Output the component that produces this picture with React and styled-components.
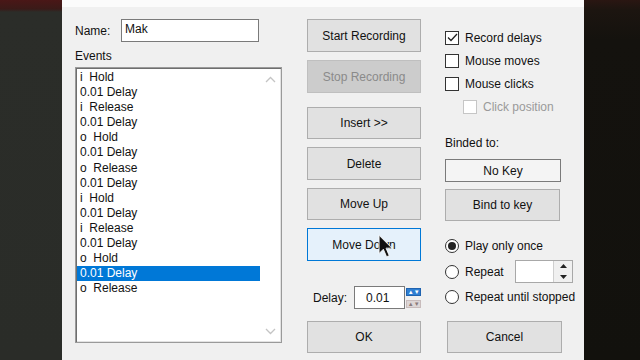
import React from 'react'
import styled, { createGlobalStyle } from 'styled-components'

const GlobalStyle = createGlobalStyle`
  body {
    margin: 0;
    overflow: hidden;
    font-family: "Liberation Sans", Arial, sans-serif;
  }
`

const Page = styled.div`
  display: flex;
  width: 640px;
  height: 360px;
  overflow: hidden;
`

const SideBg = styled.div`
  width: ${props => props.w}px;
  flex-shrink: 0;
  background: ${props => props.dark
    ? 'linear-gradient(180deg, #2a1612 0px, #1c1510 10px, #14120e 40px, #12110d 100%)'
    : 'linear-gradient(180deg, #4a1717 0px, #3a1a18 9px, #2b2d29 12px, #2a2c28 100%)'};
`

const Dialog = styled.div`
  width: 522px;
  flex-shrink: 0;
  display: flex;
  flex-direction: column;
  background: #f0f0f0;
  color: #111;
  font-size: 12px;
`

const TitleStrip = styled.div`
  height: 7px;
  background: #fbfbfb;
`

const Body = styled.div`
  flex: 1;
  display: flex;
  padding: 12px 0 0 13px;
`

const LeftCol = styled.div`
  width: 207px;
  display: flex;
  flex-direction: column;
`

const NameRow = styled.div`
  display: flex;
  align-items: center;
  height: 23px;
`

const Label = styled.span`
  width: ${props => props.w || 'auto'};
  font-size: 12px;
`

const TextBox = styled.div`
  width: 138px;
  height: 23px;
  box-sizing: border-box;
  border: 1px solid #7a7a7a;
  background: #fff;
  padding-left: 3px;
  line-height: 19px;
`

const EventsLabel = styled.div`
  margin-top: 7px;
  height: 15px;
  line-height: 15px;
`

const ListBox = styled.div`
  margin-top: 3px;
  height: 276px;
  box-sizing: border-box;
  border: 1px solid #9a9a9a;
  box-shadow: inset 1px 1px 0 #6e6e6e, inset -1px -1px 0 #e3e3e3;
  background: #fff;
  display: flex;
  padding: 2px 1px 1px 1px;
`

const Items = styled.div`
  width: 183px;
  display: flex;
  flex-direction: column;
`

const Item = styled.div`
  height: 15.1px;
  line-height: 15px;
  padding-left: 3px;
  white-space: pre;
  background: ${props => props.selected ? '#0078d7' : 'transparent'};
  color: ${props => props.selected ? '#fff' : '#111'};
`

const ScrollTrack = styled.div`
  flex: 1;
  display: flex;
  flex-direction: column;
  justify-content: space-between;
  align-items: center;
  padding: 6px 0 6px;
`

const MidCol = styled.div`
  width: 114px;
  margin-left: 25px;
  display: flex;
  flex-direction: column;
`

const Button = styled.div`
  height: ${props => props.h || 33}px;
  margin-top: ${props => props.mt || 0}px;
  box-sizing: border-box;
  display: flex;
  align-items: center;
  justify-content: center;
  border: 1px solid ${props => props.hover ? '#0078d7' : props.disabled ? '#bfbfbf' : '#adadad'};
  background: ${props => props.hover ? '#e5f1fb' : props.disabled ? '#cccccc' : '#e1e1e1'};
  color: ${props => props.disabled ? '#8a8a8a' : '#111'};
  position: relative;
`

const SideButton = styled(Button)`
  width: 115px;
  margin-left: ${props => props.ml || 0}px;
`

const DelayRow = styled.div`
  margin-top: 25px;
  height: 23px;
  display: flex;
  align-items: center;
  padding-left: 6px;
`

const DelayBox = styled.div`
  width: 53px;
  height: 23px;
  margin-left: 7px;
  box-sizing: border-box;
  border: 1px solid #7a7a7a;
  background: #fff;
  display: flex;
  align-items: center;
  justify-content: center;
  padding-right: 4px;
`

const SpinPair = styled.div`
  margin-left: 1px;
  width: 15px;
  height: 20px;
  display: flex;
  flex-direction: column;
  justify-content: space-between;
`

const SpinHalf = styled.div`
  height: 8px;
  background: ${props => props.active ? '#2f7fd2' : '#ddd6d6'};
  border: 1px solid ${props => props.active ? '#1f63b0' : '#c8bcbc'};
  box-sizing: border-box;
  display: flex;
  align-items: center;
  justify-content: center;
  font-size: 6px;
  color: ${props => props.active ? '#fff' : '#8a7a7a'};
`

const RightCol = styled.div`
  width: 135px;
  margin-left: 24px;
  display: flex;
  flex-direction: column;
`

const CheckRow = styled.div`
  height: 23px;
  margin-top: ${props => props.mt || 0}px;
  padding-left: ${props => props.indent || 0}px;
  display: flex;
  align-items: center;
  color: ${props => props.disabled ? '#9a9a9a' : '#111'};
  white-space: nowrap;
`

const Box = styled.div`
  width: 14px;
  height: 14px;
  box-sizing: border-box;
  border: 1px solid ${props => props.disabled ? '#c6c6c6' : '#333'};
  background: #fff;
  margin-right: 6px;
  display: flex;
  align-items: center;
  justify-content: center;
`

const Radio = styled.div`
  width: 14px;
  height: 14px;
  box-sizing: border-box;
  border-radius: 50%;
  border: 1px solid #333;
  background: #fff;
  margin-right: 6px;
  display: flex;
  align-items: center;
  justify-content: center;
  &::after {
    content: '';
    display: ${props => props.on ? 'block' : 'none'};
    width: 8px;
    height: 8px;
    border-radius: 50%;
    background: #222;
  }
`

const BindedLabel = styled.div`
  margin-top: 18px;
  height: 15px;
  line-height: 15px;
`

const KeyBox = styled.div`
  margin-top: 8px;
  width: 116px;
  height: 23px;
  box-sizing: border-box;
  border: 1px solid #7a7a7a;
  background: #f4f4f4;
  display: flex;
  align-items: center;
  justify-content: center;
`

const NumBox = styled.div`
  margin-left: auto;
  margin-right: 7px;
  width: 58px;
  height: 23px;
  box-sizing: border-box;
  border: 1px solid #a8a8a8;
  background: #fff;
  display: flex;
  justify-content: flex-end;
`

const NumSpin = styled.div`
  width: 18px;
  border-left: 1px solid #cfcfcf;
  background: #f0f0f0;
  display: flex;
  flex-direction: column;
  justify-content: space-around;
  align-items: center;
`

const Cursor = styled.svg`
  position: absolute;
  left: 70px;
  top: 5px;
`

const Chevron = ({ down }) => (
  <svg width="11" height="7" viewBox="0 0 11 7">
    <path d={down ? 'M1 1 L5.5 5.5 L10 1' : 'M1 6 L5.5 1.5 L10 6'} fill="none" stroke="#c4c4c4" strokeWidth="1.3" />
  </svg>
)

const Tri = ({ down }) => (
  <svg width="7" height="4" viewBox="0 0 7 4">
    <path d={down ? 'M0 0 H7 L3.5 4 Z' : 'M0 4 H7 L3.5 0 Z'} fill="#222" />
  </svg>
)

const events = [
  'i  Hold', '0.01 Delay', 'i  Release', '0.01 Delay',
  'o  Hold', '0.01 Delay', 'o  Release', '0.01 Delay',
  'i  Hold', '0.01 Delay', 'i  Release', '0.01 Delay',
  'o  Hold', '0.01 Delay', 'o  Release',
]

const App = () => {
  return (
    <Page>
      <GlobalStyle />
      <SideBg w={62} />
      <Dialog>
        <TitleStrip />
        <Body>
          <LeftCol>
            <NameRow>
              <Label w="46px">Name:</Label>
              <TextBox>Mak</TextBox>
            </NameRow>
            <EventsLabel>Events</EventsLabel>
            <ListBox>
              <Items>
                {events.map((e, i) => (
                  <Item key={i} selected={i === 13}>{e}</Item>
                ))}
              </Items>
              <ScrollTrack>
                <Chevron />
                <Chevron down />
              </ScrollTrack>
            </ListBox>
          </LeftCol>

          <MidCol>
            <Button>Start Recording</Button>
            <Button mt={8} disabled>Stop Recording</Button>
            <Button mt={14} h={32}>Insert &gt;&gt;</Button>
            <Button mt={8}>Delete</Button>
            <Button mt={8} h={32}>Move Up</Button>
            <Button mt={8} hover>
              Move Down
              <Cursor width="15" height="24" viewBox="0 0 14 22">
                <path d="M1 1 L1 18 L5 14 L8 21 L10.5 20 L7.5 13 L13 13 Z" fill="#111" stroke="#fff" strokeWidth="0.8" />
              </Cursor>
            </Button>
            <DelayRow>
              <Label>Delay:</Label>
              <DelayBox>0.01</DelayBox>
              <SpinPair>
                <SpinHalf active>▲▼</SpinHalf>
                <SpinHalf>▲▼</SpinHalf>
              </SpinPair>
            </DelayRow>
            <Button mt={12} h={32}>OK</Button>
          </MidCol>

          <RightCol>
            <CheckRow mt={7}>
              <Box>
                <svg width="11" height="9" viewBox="0 0 11 9">
                  <path d="M1 4.5 L4 7.5 L10 1" fill="none" stroke="#222" strokeWidth="1.3" />
                </svg>
              </Box>
              Record delays
            </CheckRow>
            <CheckRow><Box />Mouse moves</CheckRow>
            <CheckRow><Box />Mouse clicks</CheckRow>
            <CheckRow indent={18} disabled><Box disabled />Click position</CheckRow>
            <BindedLabel>Binded to:</BindedLabel>
            <KeyBox>No Key</KeyBox>
            <SideButton mt={7} h={32}>Bind to key</SideButton>
            <CheckRow mt={13}><Radio on />Play only once</CheckRow>
            <CheckRow mt={3}>
              <Radio />Repeat
              <NumBox>
                <NumSpin>
                  <Tri />
                  <Tri down />
                </NumSpin>
              </NumBox>
            </CheckRow>
            <CheckRow mt={2}><Radio />Repeat until stopped</CheckRow>
            <SideButton mt={13} h={32} ml={2}>Cancel</SideButton>
          </RightCol>
        </Body>
      </Dialog>
      <SideBg w={56} dark />
    </Page>
  )
}

export default App
